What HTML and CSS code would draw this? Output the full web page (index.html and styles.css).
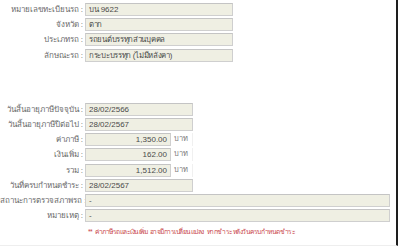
FILE: index.html
```html
<!DOCTYPE html>
<html lang="th">
<head>
<meta charset="utf-8">
<link rel="stylesheet" href="styles.css">
</head>
<body>
<div class="page">
  <div class="form">
    <div class="row"><span class="lbl">หมายเลขทะเบียนรถ :</span><span class="fld w-mid"><span class="th">บน</span> 9622</span></div>
    <div class="row"><span class="lbl">จังหวัด :</span><span class="fld w-mid th">ตาก</span></div>
    <div class="row"><span class="lbl">ประเภทรถ :</span><span class="fld w-mid th">รถยนต์บรรทุกส่วนบุคคล</span></div>
    <div class="row"><span class="lbl">ลักษณะรถ :</span><span class="fld w-mid th">กระบะบรรทุก (ไม่มีหลังคา)</span></div>
    <div class="spacer"></div>
    <div class="row"><span class="lbl">วันสิ้นอายุภาษีปัจจุบัน :</span><span class="fld w-date">28/02/2566</span></div>
    <div class="row"><span class="lbl">วันสิ้นอายุภาษีปีต่อไป :</span><span class="fld w-date">28/02/2567</span></div>
    <div class="row"><span class="lbl">ค่าภาษี :</span><span class="money"><span class="fld w-num num">1,350.00</span><span class="unit">บาท</span></span></div>
    <div class="row"><span class="lbl">เงินเพิ่ม :</span><span class="money"><span class="fld w-num num">162.00</span><span class="unit">บาท</span></span></div>
    <div class="row"><span class="lbl">รวม :</span><span class="money"><span class="fld w-num num">1,512.00</span><span class="unit">บาท</span></span></div>
    <div class="row"><span class="lbl">วันที่ครบกำหนดชำระ :</span><span class="fld w-date">28/02/2567</span></div>
    <div class="row"><span class="lbl">สถานะการตรวจสภาพรถ :</span><span class="fld w-long">-</span></div>
    <div class="row"><span class="lbl">หมายเหตุ :</span><span class="fld w-long">-</span></div>
    <div class="note">** ค่าภาษีรถและเงินเพิ่ม อาจมีการเปลี่ยนแปลง หากชำระหลังวันครบกำหนดชำระ</div>
  </div>
</div>
</body>
</html>
```
FILE: styles.css
```css
html, body {
  margin: 0;
  padding: 0;
  background: #ffffff;
}
body {
  font-family: "Liberation Sans", Tahoma, "Noto Sans", sans-serif;
  font-size: 8px;
  color: #666666;
}
.page {
  width: 396px;
  height: 245px;
  border-right: 2px solid #1e1e1e;
  border-bottom: 1px solid #eeeeee;
  background: #ffffff;
}
.form {
  padding-top: 2px;
  display: flex;
  flex-direction: column;
}
.row {
  display: grid;
  grid-template-columns: 83px auto;
  column-gap: 2px;
  height: 15.2px;
  align-items: center;
}
.lbl {
  text-align: right;
  white-space: nowrap;
  color: #6a6a6a;
}
.fld {
  box-sizing: border-box;
  height: 13px;
  line-height: 11px;
  padding: 0 3px;
  background: #efefe3;
  border: 1px solid #cfcfcf;
  border-top-color: #c4c4c4;
  color: #4a4a4a;
  white-space: nowrap;
  overflow: hidden;
}
.th {
  font-size: 7.8px;
  letter-spacing: -0.3px;
}
.w-mid { width: 148px; }
.w-date { width: 108px; }
.w-num { width: 86px; }
.w-long { width: 305px; }
.num { text-align: right; }
.money {
  display: flex;
  align-items: center;
}
.unit {
  box-sizing: border-box;
  width: 22px;
  height: 13px;
  line-height: 11px;
  padding-left: 3px;
  font-size: 7.5px;
  border-right: 1px solid #f0f0f0;
  color: #7a7a7a;
}
.spacer {
  height: 39px;
}
.note {
  margin: 3px 0 0 88px;
  color: #c9474a;
  font-size: 6.7px;
  letter-spacing: -0.5px;
  word-spacing: 1.5px;
  white-space: nowrap;
}
```
